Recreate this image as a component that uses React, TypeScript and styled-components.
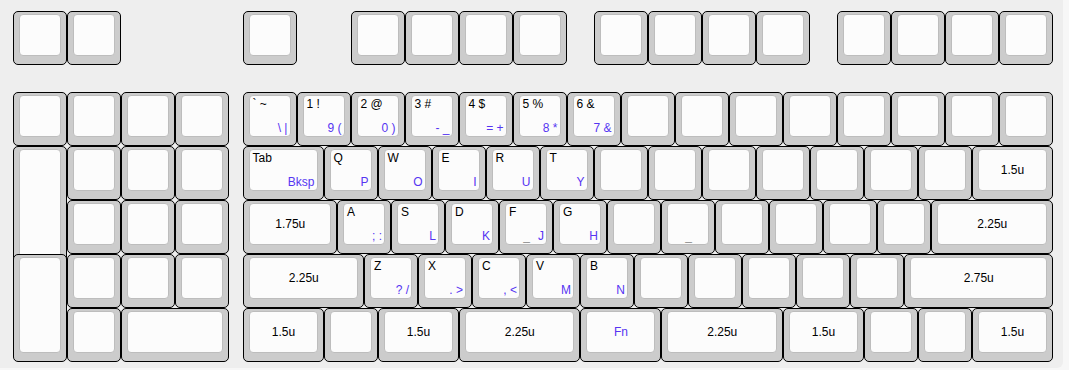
import React from "react";
import styled, { createGlobalStyle } from "styled-components";

const Global = createGlobalStyle`
  html, body { margin: 0; padding: 0; background: #f7f7f7; }
  body { font-family: "Liberation Sans", Arial, sans-serif; }
`;

const Panel = styled.div`
  width: 1063px;
  height: 368px;
  background: #eeeeee;
  border-bottom-right-radius: 6px;
  box-sizing: border-box;
  padding: 11px 0 0 13px;
`;

const Board = styled.div`
  display: grid;
  grid-template-columns: repeat(77, 13.5px);
  grid-template-rows: 54px 27px repeat(5, 54px);
`;

const Key = styled.div<{ $c: number; $r: number; $w: number; $h: number }>`
  grid-column: ${(p) => `${p.$c} / span ${p.$w}`};
  grid-row: ${(p) => `${p.$r} / span ${p.$h}`};
  box-sizing: border-box;
  border: 1px solid #000;
  border-radius: 5px;
  background: #cccccc;
  padding: 2px 5px 8px 5px;
  display: flex;
`;

const Keytop = styled.div<{ $center?: boolean }>`
  flex: 1;
  box-sizing: border-box;
  border: 1px solid #bdbdbd;
  border-radius: 4px;
  background: #fcfcfc;
  padding: 1px 2px 1px 3px;
  display: flex;
  flex-direction: column;
  justify-content: ${(p) => (p.$center ? "center" : "space-between")};
  align-items: ${(p) => (p.$center ? "center" : "stretch")};
  font-size: 12px;
  line-height: 14px;
  white-space: pre;
`;

const TopLegend = styled.div`
  color: #000;
  align-self: flex-start;
`;

const BottomRow = styled.div`
  display: grid;
  grid-template-columns: 1fr auto 1fr;
`;

const FrontCenter = styled.span`
  grid-column: 2;
  color: #8f8f8f;
`;

const BottomLegend = styled.span`
  grid-column: 3;
  justify-self: end;
  color: #5635f2;
`;

const CenterLegend = styled.span<{ $blue?: boolean }>`
  color: ${(p) => (p.$blue ? "#5635f2" : "#000")};
`;

type K = {
  x: number;
  r: number;
  w?: number;
  h?: number;
  t?: string;
  b?: string;
  c?: string;
  m?: string;
  blue?: boolean;
};

const keys: K[] = [];
// row 0 (function row)
[0, 1, 4.25, 6.25, 7.25, 8.25, 9.25, 10.75, 11.75, 12.75, 13.75, 15.25, 16.25, 17.25, 18.25].forEach((x) =>
  keys.push({ x, r: 1 })
);
// row 1
[0, 1, 2, 3].forEach((x) => keys.push({ x, r: 3 }));
const numTop = ["` ~", "1 !", "2 @", "3 #", "4 $", "5 %", "6 &"];
const numBot = ["\\ |", "9 (", "0 )", "- _", "= +", "8 *", "7 &"];
for (let i = 0; i < 15; i++) keys.push({ x: 4.25 + i, r: 3, t: numTop[i], b: numBot[i] });
// row 2
keys.push({ x: 0, r: 4, h: 2 });
[1, 2, 3].forEach((x) => keys.push({ x, r: 4 }));
keys.push({ x: 4.25, r: 4, w: 1.5, t: "Tab", b: "Bksp" });
[["Q", "P"], ["W", "O"], ["E", "I"], ["R", "U"], ["T", "Y"]].forEach(([t, b], i) =>
  keys.push({ x: 5.75 + i, r: 4, t, b })
);
for (let i = 0; i < 7; i++) keys.push({ x: 10.75 + i, r: 4 });
keys.push({ x: 17.75, r: 4, w: 1.5, c: "1.5u" });
// row 3
[1, 2, 3].forEach((x) => keys.push({ x, r: 5 }));
keys.push({ x: 4.25, r: 5, w: 1.75, c: "1.75u" });
keys.push({ x: 6, r: 5, t: "A", b: "; :" });
keys.push({ x: 7, r: 5, t: "S", b: "L" });
keys.push({ x: 8, r: 5, t: "D", b: "K" });
keys.push({ x: 9, r: 5, t: "F", b: "J", m: "_" });
keys.push({ x: 10, r: 5, t: "G", b: "H" });
keys.push({ x: 11, r: 5 });
keys.push({ x: 12, r: 5, m: "_", t: " " });
[13, 14, 15, 16].forEach((x) => keys.push({ x, r: 5 }));
keys.push({ x: 17, r: 5, w: 2.25, c: "2.25u" });
// row 4
keys.push({ x: 0, r: 6, h: 2 });
[1, 2, 3].forEach((x) => keys.push({ x, r: 6 }));
keys.push({ x: 4.25, r: 6, w: 2.25, c: "2.25u" });
[["Z", "? /"], ["X", ". >"], ["C", ", <"], ["V", "M"], ["B", "N"]].forEach(([t, b], i) =>
  keys.push({ x: 6.5 + i, r: 6, t, b })
);
for (let i = 0; i < 5; i++) keys.push({ x: 11.5 + i, r: 6 });
keys.push({ x: 16.5, r: 6, w: 2.75, c: "2.75u" });
// row 5
keys.push({ x: 1, r: 7 });
keys.push({ x: 2, r: 7, w: 2 });
keys.push({ x: 4.25, r: 7, w: 1.5, c: "1.5u" });
keys.push({ x: 5.75, r: 7 });
keys.push({ x: 6.75, r: 7, w: 1.5, c: "1.5u" });
keys.push({ x: 8.25, r: 7, w: 2.25, c: "2.25u" });
keys.push({ x: 10.5, r: 7, w: 1.5, c: "Fn", blue: true });
keys.push({ x: 12, r: 7, w: 2.25, c: "2.25u" });
keys.push({ x: 14.25, r: 7, w: 1.5, c: "1.5u" });
keys.push({ x: 15.75, r: 7 });
keys.push({ x: 16.75, r: 7 });
keys.push({ x: 17.75, r: 7, w: 1.5, c: "1.5u" });

export default function App() {
  return (
    <>
      <Global />
      <Panel>
        <Board>
          {keys.map((k, i) => {
            const w = Math.round((k.w ?? 1) * 4);
            const h = k.h ?? 1;
            const hasLegends = k.t !== undefined || k.b !== undefined || k.m !== undefined;
            return (
              <Key key={i} $c={Math.round(k.x * 4) + 1} $r={k.r} $w={w} $h={h === 2 ? 3 : 1}>
                {k.c ? (
                  <Keytop $center>
                    <CenterLegend $blue={k.blue}>{k.c}</CenterLegend>
                  </Keytop>
                ) : (
                  <Keytop>
                    {hasLegends && <TopLegend>{k.t ?? " "}</TopLegend>}
                    {hasLegends && (
                      <BottomRow>
                        {k.m && <FrontCenter>{k.m}</FrontCenter>}
                        <BottomLegend>{k.b ?? " "}</BottomLegend>
                      </BottomRow>
                    )}
                  </Keytop>
                )}
              </Key>
            );
          })}
        </Board>
      </Panel>
    </>
  );
}
